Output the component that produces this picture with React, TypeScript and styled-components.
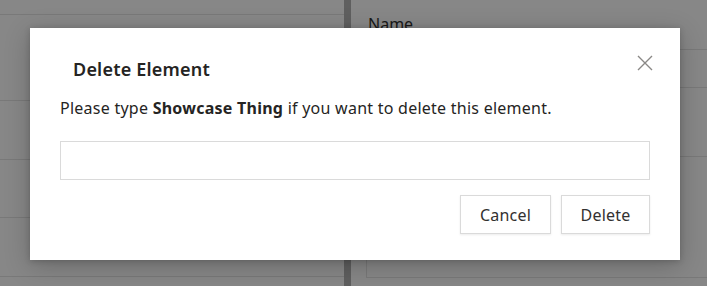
import React from "react";
import styled, { createGlobalStyle } from "styled-components";

const Global = createGlobalStyle`
  html, body { margin: 0; padding: 0; }
  body {
    font-family: "Noto Sans", "Open Sans", sans-serif;
    background: #ffffff;
    overflow: hidden;
  }
  * { box-sizing: border-box; }
`;

const Page = styled.div`
  width: 707px;
  height: 286px;
  display: flex;
  background: #ffffff;
  position: relative;
  overflow: hidden;
`;

const LeftPanel = styled.div`
  width: 344px;
  flex: none;
  display: flex;
  flex-direction: column;
`;

const Row = styled.div<{ $h: number }>`
  height: ${(p) => p.$h}px;
  flex: none;
  border-bottom: 1px solid #e4e4e4;
`;

const Divider = styled.div`
  width: 7px;
  flex: none;
  background: #b3b3b3;
`;

const RightPanel = styled.div`
  flex: 1;
  min-width: 0;
  padding-left: 15px;
  display: flex;
  flex-direction: column;
`;

const FieldLabel = styled.div`
  margin-top: 14px;
  height: 20px;
  font-size: 16px;
  color: #323130;
  line-height: 20px;
  padding-left: 2px;
`;

const FieldBox = styled.div<{ $top: number; $h: number }>`
  margin-top: ${(p) => p.$top}px;
  height: ${(p) => p.$h}px;
  width: 400px;
  flex: none;
  border: 1px solid #e4e4e4;
`;

const Overlay = styled.div`
  position: absolute;
  inset: 0;
  background: rgba(0, 0, 0, 0.47);
`;

const Dialog = styled.div`
  position: absolute;
  left: 30px;
  top: 28px;
  width: 650px;
  height: 232px;
  background: #ffffff;
  box-shadow: 0 6px 24px rgba(0, 0, 0, 0.22), 0 1px 6px rgba(0, 0, 0, 0.18);
  padding: 0 30px;
  display: flex;
  flex-direction: column;
`;

const Header = styled.div`
  display: flex;
  justify-content: space-between;
  align-items: flex-start;
  height: 58px;
  padding-top: 28px;
`;

const Title = styled.h2`
  margin: 0 0 0 13px;
  font-size: 18px;
  letter-spacing: 0.2px;
  font-weight: 600;
  color: #252423;
  line-height: 26px;
`;

const CloseButton = styled.button`
  border: none;
  background: transparent;
  padding: 0;
  margin: -3px -5px 0 0;
  width: 20px;
  height: 20px;
  display: flex;
  align-items: center;
  justify-content: center;
  cursor: pointer;
`;

const Message = styled.p`
  margin: 12px 0 0 0;
  font-size: 16px;
  letter-spacing: 0.25px;
  line-height: 20px;
  color: #252423;
  white-space: nowrap;
  strong { font-weight: 700; }
`;

const TextInput = styled.input`
  margin-top: 23px;
  width: 590px;
  height: 39px;
  border: 1px solid #dadada;
  outline: none;
  padding: 0 10px;
  font-family: inherit;
  font-size: 16px;
`;

const Actions = styled.div`
  display: flex;
  justify-content: flex-end;
  gap: 10px;
  margin-top: 15px;
  width: 590px;
`;

const Button = styled.button<{ $w: number }>`
  width: ${(p) => p.$w}px;
  height: 39px;
  background: #ffffff;
  border: 1px solid #dadada;
  box-shadow: 0 1px 2px rgba(0, 0, 0, 0.08);
  font-family: inherit;
  font-size: 16px;
  letter-spacing: 0.2px;
  color: #323130;
  padding: 1px 0 0 0;
  cursor: pointer;
`;

export default function App() {
  return (
    <>
      <Global />
      <Page>
        <LeftPanel>
          <Row $h={15} />
          <Row $h={86} />
          <Row $h={59} />
          <Row $h={58} />
          <Row $h={59} />
        </LeftPanel>
        <Divider />
        <RightPanel>
          <FieldLabel>Name</FieldLabel>
          <FieldBox $top={15} $h={39} />
          <FieldBox $top={68} $h={122} />
        </RightPanel>
        <Overlay />
        <Dialog role="dialog" aria-label="Delete Element">
          <Header>
            <Title>Delete Element</Title>
            <CloseButton aria-label="Close">
              <svg width="16" height="16" viewBox="0 0 16 16">
                <path d="M1 1 L15 15 M15 1 L1 15" stroke="#8a8886" strokeWidth="1.4" fill="none" />
              </svg>
            </CloseButton>
          </Header>
          <Message>
            Please type <strong>Showcase Thing</strong> if you want to delete this element.
          </Message>
          <TextInput />
          <Actions>
            <Button $w={91}>Cancel</Button>
            <Button $w={89}>Delete</Button>
          </Actions>
        </Dialog>
      </Page>
    </>
  );
}
